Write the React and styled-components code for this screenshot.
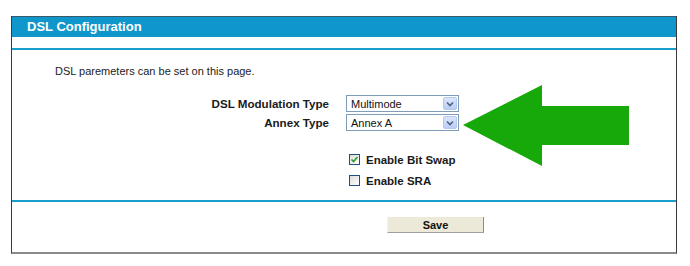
import React, { useState } from 'react';
import styled, { createGlobalStyle } from 'styled-components';

const GlobalStyle = createGlobalStyle`
  html, body {
    margin: 0;
    padding: 0;
    background: #ffffff;
    font-family: 'Liberation Sans', Arial, sans-serif;
  }
`;

const App = () => {
  const [bitSwap, setBitSwap] = useState(true);
  const [sra, setSra] = useState(false);

  return (
    <StPage>
      <GlobalStyle />
      <StPanel>
        <StHeader>DSL Configuration</StHeader>
        <StHeaderGap />

        <StBody>
          <StIntro>DSL paremeters can be set on this page.</StIntro>

          <StForm>
            <StLabel>DSL Modulation Type</StLabel>
            <StSelect>
              <span>Multimode</span>
              <StDropBtn>
                <Chevron />
              </StDropBtn>
            </StSelect>

            <StLabel>Annex Type</StLabel>
            <StSelect>
              <span>Annex A</span>
              <StDropBtn>
                <Chevron />
              </StDropBtn>
            </StSelect>
          </StForm>

          <StChecks>
            <StCheckRow onClick={() => setBitSwap(!bitSwap)}>
              <StBox>{bitSwap && <Tick />}</StBox>
              Enable Bit Swap
            </StCheckRow>
            <StCheckRow onClick={() => setSra(!sra)}>
              <StBox>{sra && <Tick />}</StBox>
              Enable SRA
            </StCheckRow>
          </StChecks>

          <StArrow viewBox='0 0 166 81' width='166' height='81'>
            <polygon points='0,40 79,0 79,21 166,21 166,60 79,60 79,81' fill='#17a80a' />
          </StArrow>
        </StBody>

        <StFooter>
          <StSaveBtn type='button'>Save</StSaveBtn>
        </StFooter>
      </StPanel>
    </StPage>
  );
};

const Chevron = () => (
  <svg width='8' height='6' viewBox='0 0 8 6'>
    <path d='M1 1.5 L4 4.5 L7 1.5' stroke='#4d6185' strokeWidth='1.6' fill='none' />
  </svg>
);

const Tick = () => (
  <svg width='9' height='9' viewBox='0 0 9 9'>
    <path d='M1.5 4.5 L3.6 6.6 L7.5 2' stroke='#2f9a2f' strokeWidth='1.6' fill='none' />
  </svg>
);

export default App;

const StPage = styled.div`
  padding: 16px 0 0 11px;
  width: 690px;
  height: 266px;
  box-sizing: border-box;
`;

const StPanel = styled.div`
  width: 666px;
  border-left: 1px solid #3a3a3a;
  border-right: 1px solid #3a3a3a;
  border-bottom: 2px solid #8a8a8a;
  box-sizing: border-box;
`;

const StHeader = styled.div`
  height: 20px;
  padding-left: 15px;
  background-color: #0f97cb;
  border-top: 1px solid #3a5a6a;
  color: #ffffff;
  font-weight: bold;
  font-size: 13px;
  line-height: 20px;
`;

const StHeaderGap = styled.div`
  height: 11px;
  border-bottom: 2px solid #1a9ccc;
`;

const StBody = styled.div`
  position: relative;
  height: 152px;
  padding-top: 15px;
  box-sizing: border-box;
  border-bottom: 2px solid #1a9ccc;
`;

const StIntro = styled.p`
  margin: 0 0 17px 43px;
  font-size: 11px;
  line-height: 13px;
  color: #222222;
`;

const StForm = styled.div`
  display: grid;
  grid-template-columns: 317px 113px;
  column-gap: 17px;
  row-gap: 2px;
  align-items: center;
`;

const StLabel = styled.span`
  text-align: right;
  font-size: 11.6px;
  font-weight: bold;
  color: #1a1a1a;
`;

const StSelect = styled.div`
  display: flex;
  align-items: center;
  justify-content: space-between;
  height: 17px;
  padding: 0 1px 0 4px;
  box-sizing: border-box;
  border: 1px solid #7f9db9;
  background: #ffffff;
  font-size: 11px;
  color: #111111;
`;

const StDropBtn = styled.span`
  display: flex;
  align-items: center;
  justify-content: center;
  width: 14px;
  height: 13px;
  border-radius: 2px;
  background: linear-gradient(#dce6fa, #b9cdf5);
  border: 1px solid #b5c8ef;
  box-sizing: border-box;
`;

const StChecks = styled.div`
  display: flex;
  flex-direction: column;
  gap: 8px;
  margin: 22px 0 0 337px;
`;

const StCheckRow = styled.label`
  display: flex;
  align-items: center;
  gap: 6px;
  height: 13px;
  font-size: 11.5px;
  font-weight: bold;
  color: #1a1a1a;
  cursor: pointer;
`;

const StBox = styled.span`
  display: flex;
  align-items: center;
  justify-content: center;
  width: 11px;
  height: 11px;
  border: 1px solid #1c5180;
  background: linear-gradient(135deg, #dcdcd7, #ffffff);
  box-sizing: border-box;
`;

const StArrow = styled.svg`
  position: absolute;
  left: 451px;
  top: 35px;
`;

const StFooter = styled.div`
  display: flex;
  justify-content: flex-start;
  height: 50px;
  padding: 15px 0 0 375px;
  box-sizing: border-box;
`;

const StSaveBtn = styled.button`
  width: 97px;
  height: 16px;
  padding: 0;
  border: none;
  border-right: 1px solid #8c8c8c;
  border-bottom: 1px solid #a0a0a0;
  border-left: 1px solid #f2f2f2;
  background: #ece9d8;
  font-family: 'Liberation Sans', Arial, sans-serif;
  font-size: 11px;
  font-weight: bold;
  color: #111111;
`;
